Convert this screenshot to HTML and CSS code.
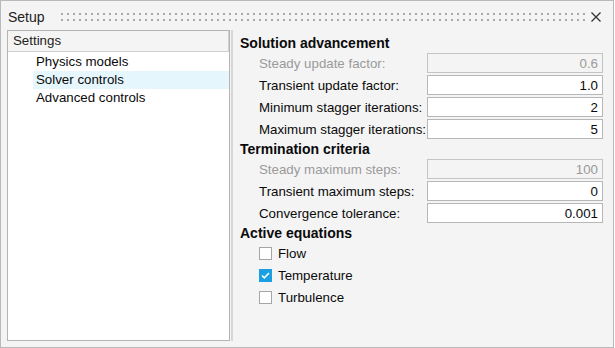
FILE: index.html
```html
<!DOCTYPE html>
<html lang="en">
<head>
    <meta charset="UTF-8">
    <title>Setup</title>
    <link rel="stylesheet" href="styles.css">
</head>
<body>

    <div class="window">
        <div class="titlebar">
            <span class="title">Setup</span>
            <div class="grip"></div>
            <svg class="close" width="10" height="10" viewBox="0 0 10 10">
                <path d="M0.5 0.5 L9.5 9.5 M9.5 0.5 L0.5 9.5" stroke="#333" stroke-width="1.3" fill="none"/>
            </svg>
        </div>

        <div class="content">
            <div class="tree">
                <div class="tree-header">Settings</div>
                <div class="tree-item">Physics models</div>
                <div class="tree-item selected">Solver controls</div>
                <div class="tree-item">Advanced controls</div>
            </div>

            <div class="splitter"></div>

            <div class="form">
                <div class="section">
                    <div class="section-title">Solution advancement</div>
                    <div class="fields">
                        <div class="field disabled">
                            <label>Steady update factor:</label>
                            <input type="text" value="0.6" disabled>
                        </div>
                        <div class="field">
                            <label>Transient update factor:</label>
                            <input type="text" value="1.0">
                        </div>
                        <div class="field">
                            <label>Minimum stagger iterations:</label>
                            <input type="text" value="2">
                        </div>
                        <div class="field">
                            <label>Maximum stagger iterations:</label>
                            <input type="text" value="5">
                        </div>
                    </div>
                </div>

                <div class="section">
                    <div class="section-title">Termination criteria</div>
                    <div class="fields">
                        <div class="field disabled">
                            <label>Steady maximum steps:</label>
                            <input type="text" value="100" disabled>
                        </div>
                        <div class="field">
                            <label>Transient maximum steps:</label>
                            <input type="text" value="0">
                        </div>
                        <div class="field">
                            <label>Convergence tolerance:</label>
                            <input type="text" value="0.001">
                        </div>
                    </div>
                </div>

                <div class="section">
                    <div class="section-title">Active equations</div>
                    <div class="fields">
                        <div class="check">
                            <span class="box"></span>
                            <span>Flow</span>
                        </div>
                        <div class="check">
                            <span class="box checked">
                                <svg width="13" height="13" viewBox="0 0 13 13">
                                    <path d="M3 6.5 L5.3 8.8 L10 4" stroke="#fff" stroke-width="1.6" fill="none"/>
                                </svg>
                            </span>
                            <span>Temperature</span>
                        </div>
                        <div class="check">
                            <span class="box"></span>
                            <span>Turbulence</span>
                        </div>
                    </div>
                </div>
            </div>
        </div>
    </div>

</body>
</html>
```

FILE: styles.css
```css
body {
    margin: 0;
    background-color: #fff;
    font-family: "Liberation Sans", Arial, sans-serif;
    font-size: 13.3px;
    color: #0a0a0a;
}
.window {
    width: 614px;
    height: 348px;
    box-sizing: border-box;
    border: 1px solid #b9b9b9;
    background-color: #f4f4f4;
    display: flex;
    flex-direction: column;
}
.titlebar {
    height: 29px;
    display: flex;
    align-items: center;
    padding: 0 12px 0 7px;
}
.title {
    font-size: 14px;
    color: #222;
    margin-top: 2px;
}
.grip {
    flex: 1;
    height: 8px;
    margin: 2px 6px 0 16px;
    background-image: radial-gradient(circle at 1px 1px, #a8a8a8 1px, transparent 1.3px);
    background-size: 6px 6px;
}
.close {
    margin-top: 2px;
}
.content {
    flex: 1;
    display: flex;
    padding: 0 0 6px 6px;
}
.tree {
    width: 223px;
    box-sizing: border-box;
    border: 1px solid #b4b4b4;
    background-color: #fff;
}
.tree-header {
    height: 20px;
    line-height: 20px;
    padding-left: 5px;
    background-color: #f4f4f4;
    border-bottom: 1px solid #cfcfcf;
    border-right: 1px solid #cfcfcf;
    color: #222;
}
.tree-item {
    height: 18px;
    line-height: 18px;
    margin-left: 25px;
    padding-left: 3px;
}
.tree-header + .tree-item {
    margin-top: 1px;
}
.tree-item.selected {
    background-color: #e5f6fd;
}
.splitter {
    width: 2px;
    margin-left: 1px;
    background-color: #d6d6d6;
}
.form {
    flex: 1;
    padding: 3px 10px 0 7px;
}
.section-title {
    height: 20px;
    line-height: 20px;
    font-size: 14px;
    font-weight: bold;
}
.fields {
    display: flex;
    flex-direction: column;
    gap: 2px;
}
.field {
    display: grid;
    grid-template-columns: 1fr 176px;
    height: 20px;
    align-items: center;
}
.field label {
    padding-left: 19px;
}
.field input {
    box-sizing: border-box;
    width: 176px;
    height: 20px;
    margin: 0;
    border: 1px solid #b7b7b7;
    background-color: #fff;
    font-family: "Liberation Sans", Arial, sans-serif;
    font-size: 13.3px;
    color: #0a0a0a;
    text-align: right;
    padding: 0 4px 0 2px;
}
.field.disabled label {
    color: #9a9a9a;
}
.field.disabled input {
    background-color: #f4f4f4;
    border-color: #c4c4c4;
    color: #9a9a9a;
}
.check {
    height: 20px;
    display: flex;
    align-items: center;
    padding-left: 19px;
    gap: 6px;
}
.box {
    width: 13px;
    height: 13px;
    box-sizing: border-box;
    border: 1px solid #a6a6a6;
    background-color: #fff;
    display: flex;
    align-items: center;
    justify-content: center;
}
.box.checked {
    border-color: #1a9fe2;
    background-color: #1a9fe2;
}
.box svg {
    flex: none;
}
```
